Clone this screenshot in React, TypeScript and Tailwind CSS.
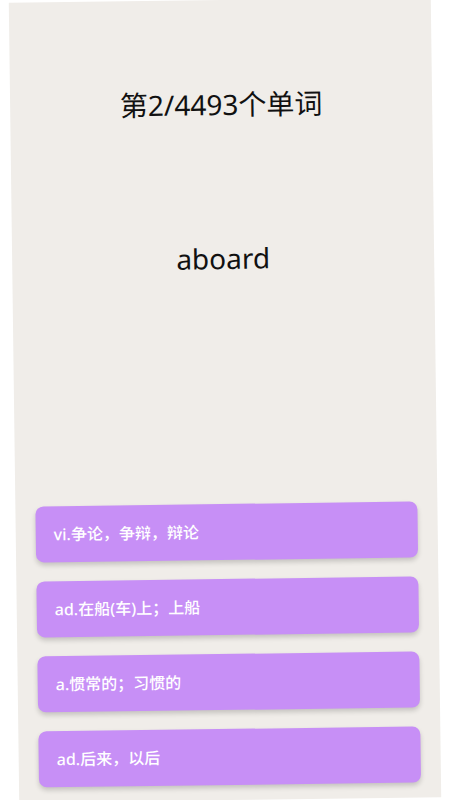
const meanings = ["vi.争论，争辩，辩论", "ad.在船(车)上；上船", "a.惯常的；习惯的", "ad.后来，以后"];

export default function App() {
  return (
    <div
      className="flex h-[800px] w-[450px] justify-center overflow-hidden bg-white"
      style={{ fontFamily: '"Noto Sans", "Noto Sans CJK SC", sans-serif' }}
    >
      <div className="flex h-[800px] w-[422px] shrink-0 -rotate-[0.75deg] flex-col items-center bg-[#f0ede9]">
        <div className="mt-[88px] text-[28px] leading-[32px] text-[#111]">第2/4493个单词</div>
        <div className="mt-[120px] text-[28px] leading-[36px] text-[#111]">aboard</div>
        <div className="mt-[228px] flex w-full flex-col gap-[19px] px-5">
          {meanings.map((m) => (
            <div
              key={m}
              className="flex h-[56px] items-center rounded-lg bg-[#c78ff6] px-[18px] text-[16px] font-medium text-white shadow-[0_3px_5px_rgba(0,0,0,0.18)]"
            >
              {m}
            </div>
          ))}
        </div>
      </div>
    </div>
  );
}
